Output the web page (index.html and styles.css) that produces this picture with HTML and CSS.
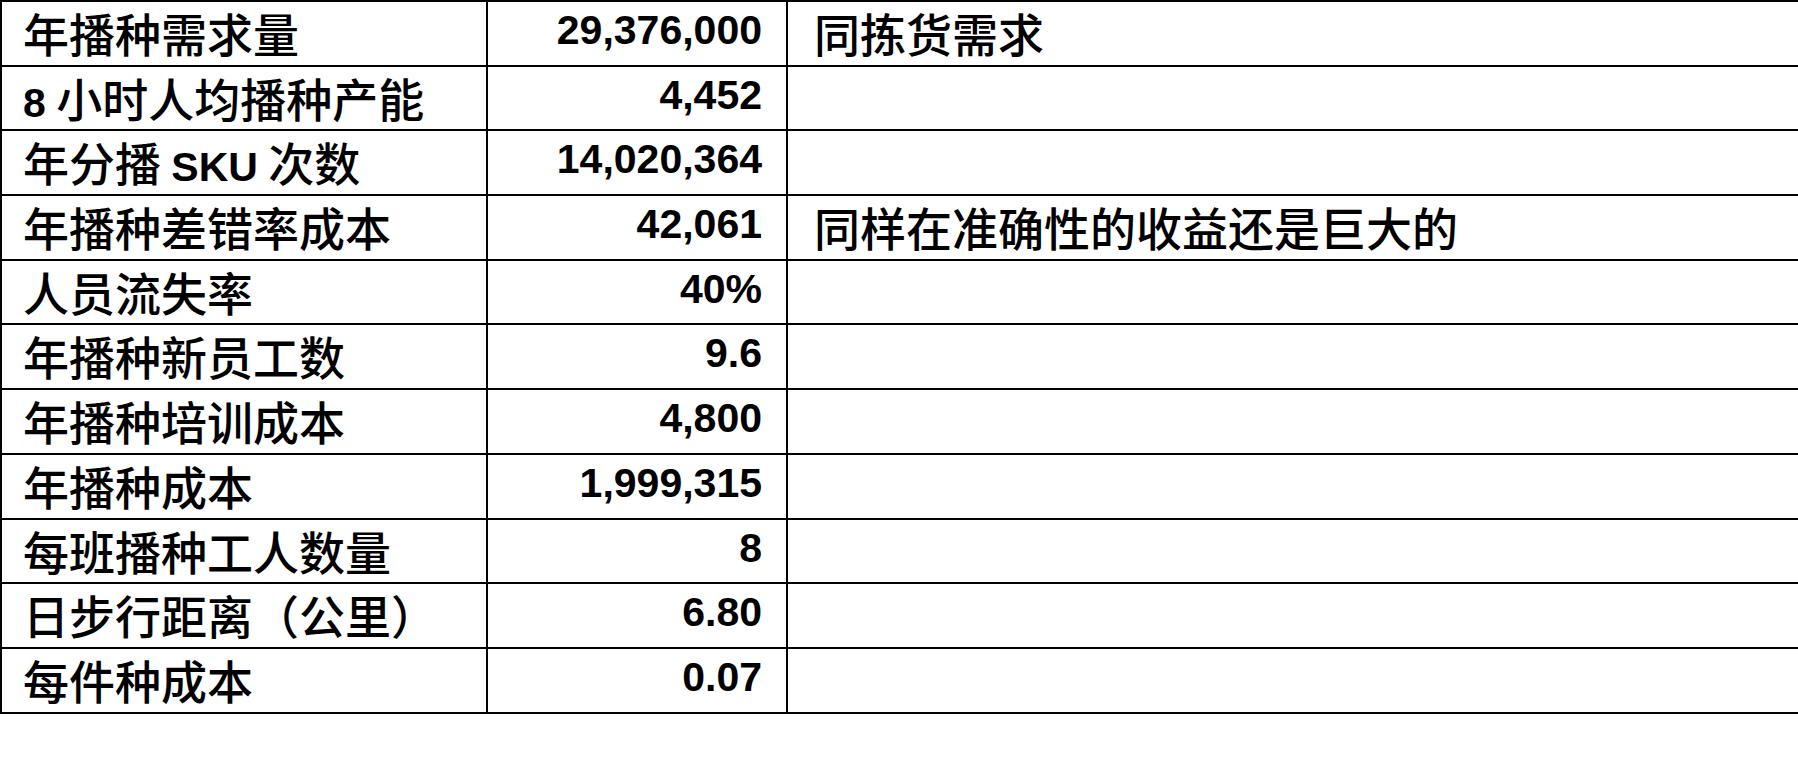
FILE: index.html
```html
<!DOCTYPE html>
<html lang="zh-CN">
<head>
<meta charset="utf-8">
<title>播种成本</title>
<link rel="stylesheet" href="styles.css">
</head>
<body>
<div class="sheet">
  <div class="cell label">年播种需求量</div>
  <div class="cell num">29,376,000</div>
  <div class="cell note">同拣货需求</div>

  <div class="cell label"><span class="lat">8</span> 小时人均播种产能</div>
  <div class="cell num">4,452</div>
  <div class="cell note"></div>

  <div class="cell label">年分播 <span class="lat">SKU</span> 次数</div>
  <div class="cell num">14,020,364</div>
  <div class="cell note"></div>

  <div class="cell label">年播种差错率成本</div>
  <div class="cell num">42,061</div>
  <div class="cell note">同样在准确性的收益还是巨大的</div>

  <div class="cell label">人员流失率</div>
  <div class="cell num">40%</div>
  <div class="cell note"></div>

  <div class="cell label">年播种新员工数</div>
  <div class="cell num">9.6</div>
  <div class="cell note"></div>

  <div class="cell label">年播种培训成本</div>
  <div class="cell num">4,800</div>
  <div class="cell note"></div>

  <div class="cell label">年播种成本</div>
  <div class="cell num">1,999,315</div>
  <div class="cell note"></div>

  <div class="cell label">每班播种工人数量</div>
  <div class="cell num">8</div>
  <div class="cell note"></div>

  <div class="cell label">日步行距离（公里）</div>
  <div class="cell num">6.80</div>
  <div class="cell note"></div>

  <div class="cell label">每件种成本</div>
  <div class="cell num">0.07</div>
  <div class="cell note"></div>
</div>
</body>
</html>
```

FILE: styles.css
```css
html, body {
  margin: 0;
  padding: 0;
  background: #ffffff;
  overflow: hidden;
}

.sheet {
  display: grid;
  grid-template-columns: 486px 300px 1010px;
  grid-auto-rows: 64.7px;
  width: 1796px;
  border-top: 2px solid #000;
  border-left: 2px solid #000;
  color: #000;
}

.cell {
  box-sizing: border-box;
  border-right: 2px solid #000;
  border-bottom: 2px solid #000;
  white-space: nowrap;
}

.cell.note {
  border-right: none;
}

.label,
.note {
  font-family: "Noto Sans CJK SC", sans-serif;
  font-size: 46px;
  font-weight: 500;
  line-height: 60px;
}

.label {
  padding-left: 21px;
}

.note {
  padding-left: 26px;
}

.lat {
  font-family: "Liberation Sans", sans-serif;
  font-weight: bold;
  font-size: 41px;
}

.num {
  font-family: "Liberation Sans", sans-serif;
  font-weight: bold;
  font-size: 41px;
  line-height: 56px;
  text-align: right;
  padding-right: 24px;
}
```
